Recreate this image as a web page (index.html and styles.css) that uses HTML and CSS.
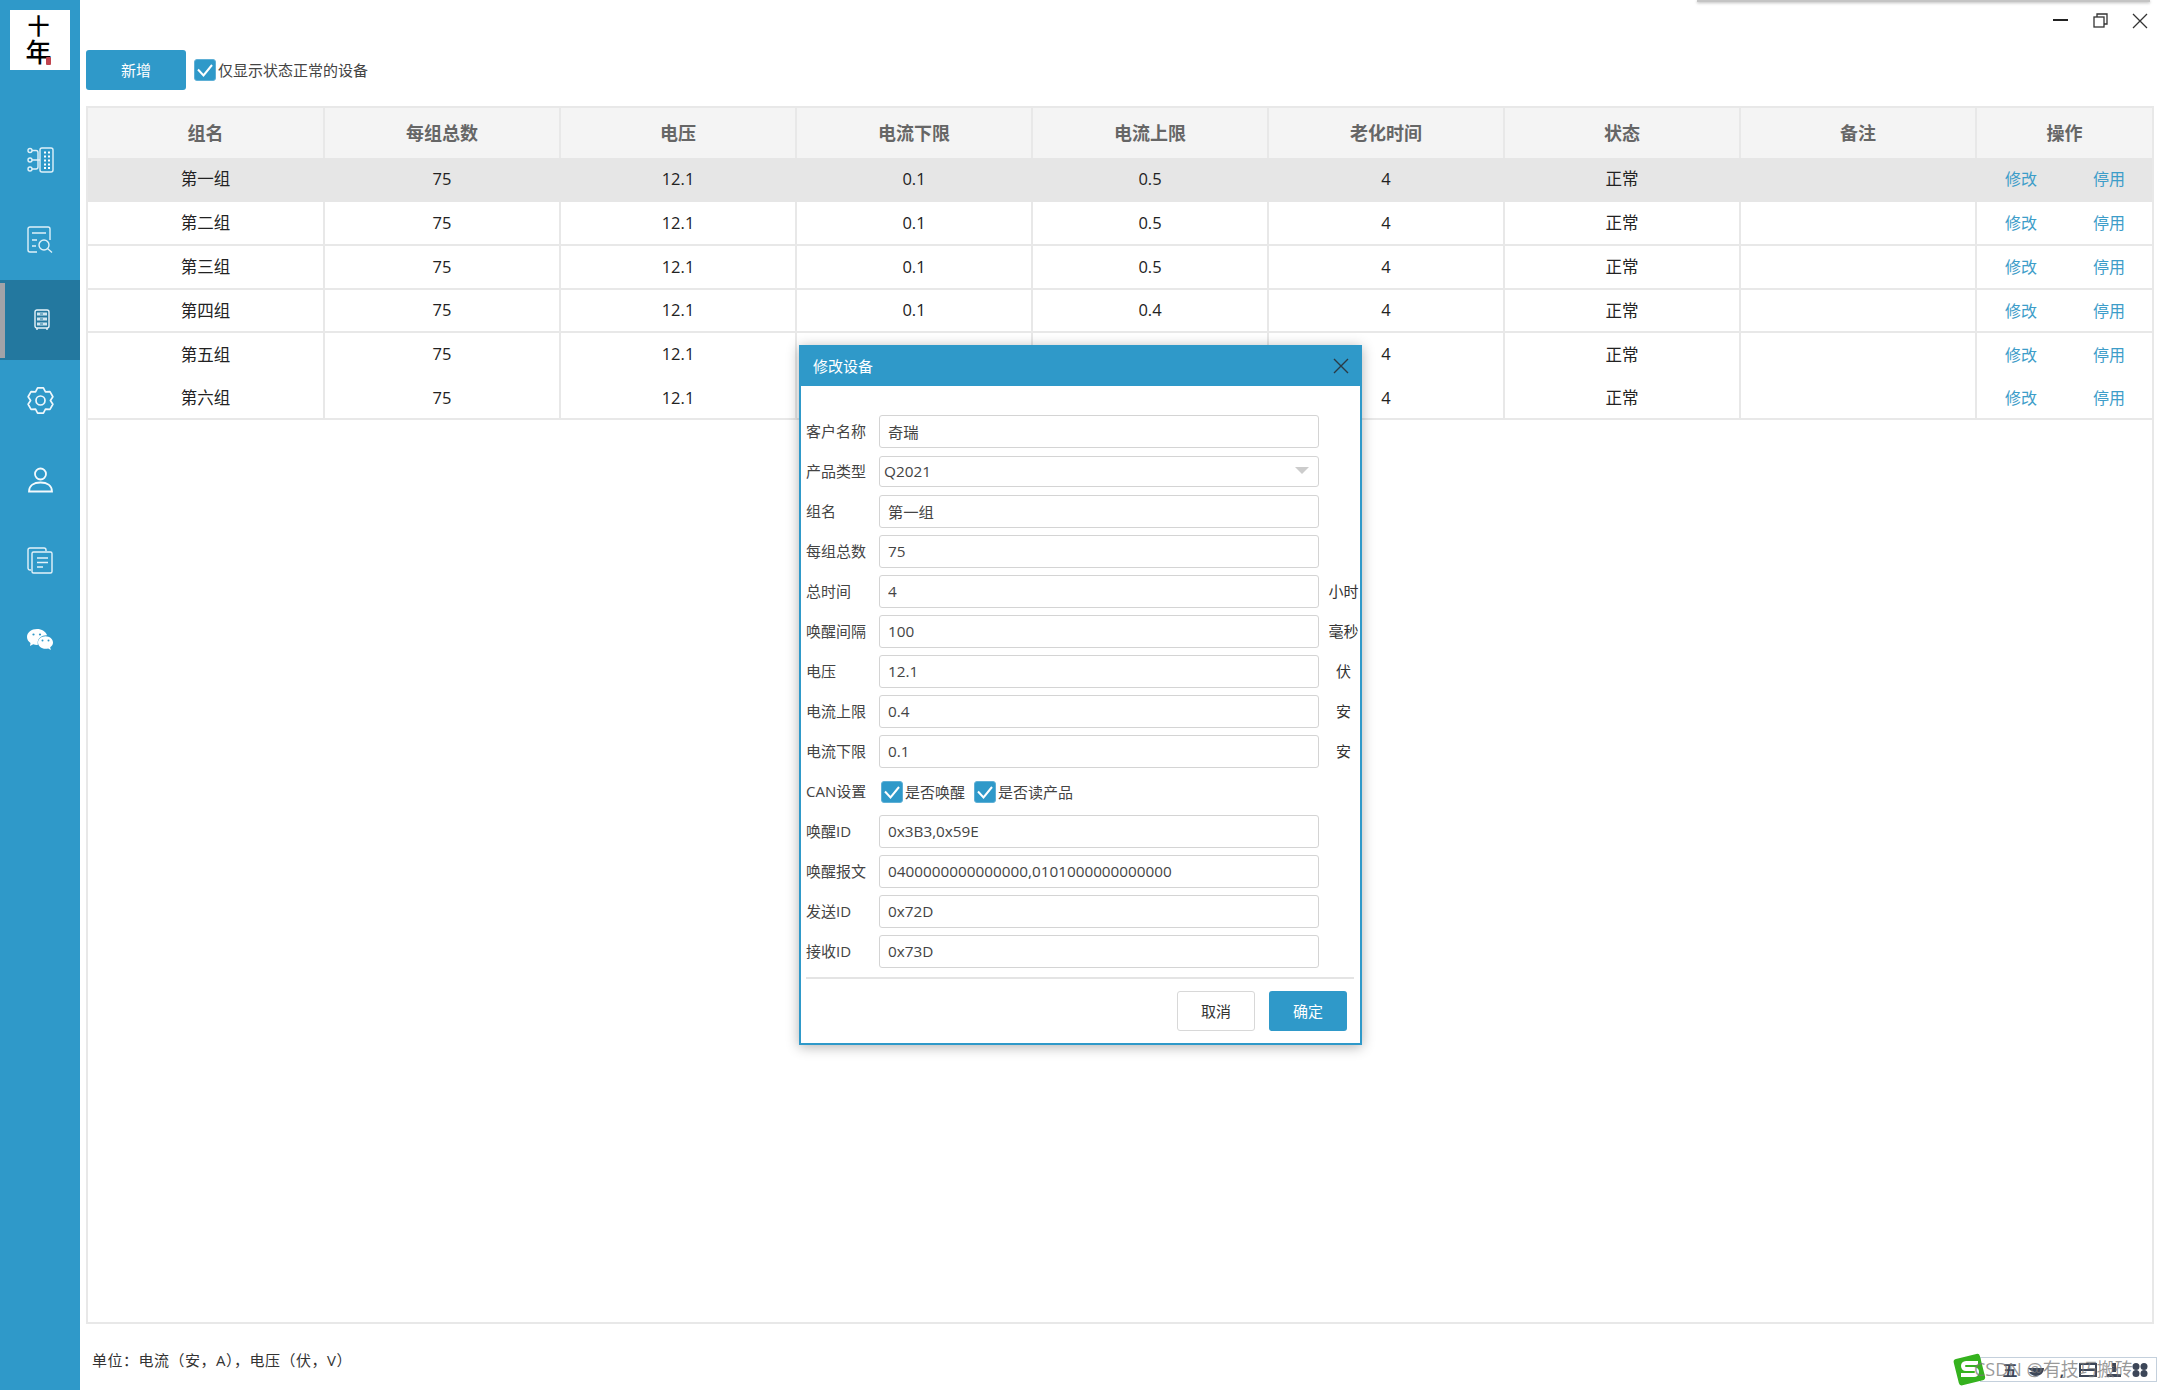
FILE: index.html
```html
<!DOCTYPE html>
<html lang="zh-CN">
<head>
  <meta charset="UTF-8">
  <title>设备管理</title>
  <link rel="stylesheet" href="styles.css">
</head>
<body>

<div class="app">
  <aside class="sidebar">
    <div class="logo">
      <span class="logo-ten">十</span>
      <span class="logo-year">年</span>
      <span class="logo-seal"></span>
    </div>

    <a class="nav-item">
      <svg width="28" height="28" viewBox="0 0 28 28" fill="none" stroke="#dff1f9" stroke-width="1.4">
        <circle cx="4" cy="4.5" r="2"/><circle cx="4" cy="14" r="2"/><circle cx="4" cy="23" r="2"/>
        <path d="M6 4.5h4a2 2 0 0 1 2 2V21a2 2 0 0 1-2 2H6M6 14h8"/>
        <rect x="14" y="2" width="13" height="24" rx="2"/>
        <path d="M18 6.500h2M22 6.500h2M18 10.500h2M22 10.500h2M18 14.500h2M22 14.500h2M18 18.500h2M22 18.500h2M18 22h2M22 22h2" stroke="#fff" stroke-width="2"/>
      </svg>
    </a>
    <a class="nav-item">
      <svg width="28" height="28" viewBox="0 0 28 28" fill="none" stroke="#dff1f9" stroke-width="1.4">
        <path d="M11 26H4a2 2 0 0 1-2-2V3a2 2 0 0 1 2-2h18a2 2 0 0 1 2 2v11"/>
        <path d="M6 7h14M6 14h5M6 20h4"/>
        <circle cx="18" cy="19" r="5"/>
        <path d="M21.500 22.500L26 26.500"/>
      </svg>
    </a>
    <a class="nav-item active">
      <svg width="16" height="22" viewBox="0 0 16 22" fill="none" stroke="#e8f4fa" stroke-width="1.4">
        <rect x="1" y="1" width="14" height="18" rx="2"/>
        <path d="M3 19v2M13 19v2"/>
        <rect x="3" y="3.500" width="10" height="3" fill="#cfe6f0" stroke="none"/>
        <rect x="3" y="8.500" width="10" height="3" fill="#cfe6f0" stroke="none"/>
        <rect x="3" y="13.500" width="10" height="3" fill="#cfe6f0" stroke="none"/>
        <path d="M6 5h3M6 10h3M6 15h3" stroke="#23789f" stroke-width="1.2"/>
      </svg>
    </a>
    <a class="nav-item">
      <svg width="27" height="27" viewBox="0 0 24 24" fill="none" stroke="#f0f8fc" stroke-width="1.500" stroke-linejoin="round">
        <polygon points="14.59,.8 16.4,4.38 20.41,4.16 23,8.64 20.8,12 23,15.36 20.41,19.84 16.4,19.62 14.59,23.2 9.41,23.2 7.6,19.62 3.59,19.84 1,15.36 3.2,12 1,8.64 3.59,4.16 7.6,4.38 9.41,.8"/>
        <circle cx="12" cy="12" r="4"/>
      </svg>
    </a>
    <a class="nav-item nav-user">
      <svg width="27" height="27" viewBox="0 0 27 27" fill="none" stroke="#f4fafd" stroke-width="1.800">
        <circle cx="13.500" cy="8" r="5.500"/>
        <path d="M2 25.500c0-6 5-9 11.500-9s11.500 3 11.500 9z"/>
      </svg>
    </a>
    <a class="nav-item">
      <svg width="26" height="27" viewBox="0 0 26 27" fill="none" stroke="#e4f2f9" stroke-width="1.400">
        <path d="M4 23H3a2 2 0 0 1-2-2V3a2 2 0 0 1 2-2h14a2 2 0 0 1 2 2v1"/>
        <rect x="5" y="5" width="20" height="21" rx="1.500"/>
        <path d="M10 11h11M10 15.500h11M10 20h6"/>
      </svg>
    </a>
    <a class="nav-item">
      <svg width="26" height="22" viewBox="0 0 26 22" fill="#fff">
        <path d="M10 0C4.500 0 0 3.500 0 8c0 2.500 1.400 4.600 3.500 6L3 17l3.200-1.700c1.200.4 2.500.6 3.800.6.400 0 .7 0 1-.1-.2-.7-.3-1.400-.3-2.100 0-4.200 3.900-7.500 8.800-7.500h.6C18.900 2.700 14.800 0 10 0z"/>
        <path d="M26 13.500c0-3.500-3.400-6.300-7.500-6.300S11 10 11 13.500s3.400 6.300 7.500 6.300c1 0 1.900-.2 2.700-.4l2.600 1.500-.6-2.600c1.700-1.200 2.800-2.900 2.800-4.800z"/>
        <circle cx="6.500" cy="5.500" r="1.100" fill="#2f99c9"/><circle cx="13" cy="5.500" r="1.100" fill="#2f99c9"/>
        <circle cx="15.500" cy="11.500" r="1" fill="#2f99c9"/><circle cx="21.500" cy="11.500" r="1" fill="#2f99c9"/>
      </svg>
    </a>
  </aside>

  <main class="main">
    <div class="titlebar">
      <div class="top-shadow"></div>
      <svg class="win-btn" width="16" height="16" viewBox="0 0 16 16" stroke="#222" fill="none"><path d="M0 7h15" stroke-width="2"/></svg>
      <svg class="win-btn" width="16" height="16" viewBox="0 0 16 16" stroke="#333" fill="none" stroke-width="1.300"><rect x="1" y="4" width="10" height="10"/><path d="M4 4V1h10v10h-3"/></svg>
      <svg class="win-btn win-close" width="16" height="16" viewBox="0 0 16 16" stroke="#333" fill="none" stroke-width="1.300"><path d="M1 1l14 14M15 1L1 15"/></svg>
    </div>

    <div class="toolbar">
      <button class="btn btn-primary btn-add">新增</button>
      <label class="check check-large">
        <span class="check-box"><svg viewBox="0 0 20 20" fill="none" stroke="#fff" stroke-width="2"><path d="M3 9.500l5.500 6L17 5"/></svg></span>
        仅显示状态正常的设备
      </label>
    </div>

    <div class="table-wrap">
      <table class="grid">
        <colgroup>
          <col class="col"><col class="col"><col class="col"><col class="col">
          <col class="col"><col class="col"><col class="col"><col class="col"><col>
        </colgroup>
        <thead>
          <tr><th>组名</th><th>每组总数</th><th>电压</th><th>电流下限</th><th>电流上限</th><th>老化时间</th><th>状态</th><th>备注</th><th>操作</th></tr>
        </thead>
        <tbody>
          <tr class="selected"><td>第一组</td><td>75</td><td>12.1</td><td>0.1</td><td>0.5</td><td>4</td><td>正常</td><td></td><td class="ops"><a>修改</a><a>停用</a></td></tr>
          <tr><td>第二组</td><td>75</td><td>12.1</td><td>0.1</td><td>0.5</td><td>4</td><td>正常</td><td></td><td class="ops"><a>修改</a><a>停用</a></td></tr>
          <tr><td>第三组</td><td>75</td><td>12.1</td><td>0.1</td><td>0.5</td><td>4</td><td>正常</td><td></td><td class="ops"><a>修改</a><a>停用</a></td></tr>
          <tr><td>第四组</td><td>75</td><td>12.1</td><td>0.1</td><td>0.4</td><td>4</td><td>正常</td><td></td><td class="ops"><a>修改</a><a>停用</a></td></tr>
          <tr class="no-line"><td>第五组</td><td>75</td><td>12.1</td><td>0.1</td><td>0.5</td><td>4</td><td>正常</td><td></td><td class="ops"><a>修改</a><a>停用</a></td></tr>
          <tr><td>第六组</td><td>75</td><td>12.1</td><td>0.1</td><td>0.5</td><td>4</td><td>正常</td><td></td><td class="ops"><a>修改</a><a>停用</a></td></tr>
        </tbody>
      </table>
    </div>

    <div class="footer">单位：电流（安，A），电压（伏，V）</div>
  </main>
</div>

<!-- 修改设备 弹窗 -->
<div class="dialog">
  <div class="dialog-head">
    <span>修改设备</span>
    <svg width="16" height="16" viewBox="0 0 16 16" stroke="#2b3a44" fill="none" stroke-width="1.400"><path d="M1 1l14 14M15 1L1 15"/></svg>
  </div>
  <div class="dialog-body">
    <div class="form-row"><label>客户名称</label><input class="field" value="奇瑞"></div>
    <div class="form-row"><label>产品类型</label><div class="field select"><span>Q2021</span><i class="caret"></i></div></div>
    <div class="form-row"><label>组名</label><input class="field" value="第一组"></div>
    <div class="form-row"><label>每组总数</label><input class="field" value="75"></div>
    <div class="form-row"><label>总时间</label><input class="field" value="4"><span class="unit">小时</span></div>
    <div class="form-row"><label>唤醒间隔</label><input class="field" value="100"><span class="unit">毫秒</span></div>
    <div class="form-row"><label>电压</label><input class="field" value="12.1"><span class="unit">伏</span></div>
    <div class="form-row"><label>电流上限</label><input class="field" value="0.4"><span class="unit">安</span></div>
    <div class="form-row"><label>电流下限</label><input class="field" value="0.1"><span class="unit">安</span></div>
    <div class="form-row">
      <label>CAN设置</label>
      <div class="check-group">
        <span class="check"><span class="check-box"><svg viewBox="0 0 20 20" fill="none" stroke="#fff" stroke-width="2"><path d="M3 9.500l5.500 6L17 5"/></svg></span>是否唤醒</span>
        <span class="check"><span class="check-box"><svg viewBox="0 0 20 20" fill="none" stroke="#fff" stroke-width="2"><path d="M3 9.500l5.500 6L17 5"/></svg></span>是否读产品</span>
      </div>
    </div>
    <div class="form-row"><label>唤醒ID</label><input class="field" value="0x3B3,0x59E"></div>
    <div class="form-row"><label>唤醒报文</label><input class="field" value="0400000000000000,0101000000000000"></div>
    <div class="form-row"><label>发送ID</label><input class="field" value="0x72D"></div>
    <div class="form-row"><label>接收ID</label><input class="field" value="0x73D"></div>
  </div>
  <div class="dialog-foot">
    <button class="btn btn-plain">取消</button>
    <button class="btn btn-primary">确定</button>
  </div>
</div>

<!-- 输入法工具条 + 水印 -->
<div class="ime">
  <svg class="ime-logo" width="34" height="34" viewBox="0 0 34 34">
    <rect x="3" y="3" width="27" height="27" rx="3" fill="#35b21e" transform="rotate(-14 17 17)"/>
    <path d="M25 10H13c-4 0-4 6 0 6h8c4 0 4 6 0 6H8" fill="none" stroke="#fff" stroke-width="4"/>
  </svg>
  <span class="ime-icon">五</span>
  <svg class="ime-svg" width="20" height="16" viewBox="0 0 20 16" fill="#3c4658"><path d="M2 6h16c0 5-4 8-8 8-3 0-6-2-7-4h5C6 9 3 8 2 6z"/></svg>
  <span class="ime-icon">,</span>
  <svg class="ime-svg" width="20" height="16" viewBox="0 0 20 16" fill="none" stroke="#3c4658" stroke-width="2"><rect x="2" y="2" width="16" height="12"/><path d="M2 8h16"/></svg>
  <svg class="ime-svg" width="20" height="16" viewBox="0 0 20 16" fill="#3c4658"><path d="M8 1h4v9H8zM3 12h14v3H3z"/></svg>
  <svg class="ime-svg" width="20" height="16" viewBox="0 0 20 16" fill="#3c4658"><circle cx="6" cy="4.500" r="3.500"/><circle cx="14" cy="4.500" r="3.500"/><circle cx="6" cy="11.500" r="3.500"/><circle cx="14" cy="11.500" r="3.500"/></svg>
  <span class="watermark">CSDN @有技巧搬砖</span>
</div>

</body>
</html>
```

FILE: styles.css
```css
* {
  box-sizing: border-box;
}

html, body {
  margin: 0;
  height: 100%;
}

body {
  font-family: "Open Sans", "Noto Sans CJK SC", sans-serif;
  font-size: 15px;
  color: #333;
  background: #fff;
  overflow: hidden;
}

.app {
  display: flex;
  height: 1390px;
}

/* 左侧菜单 */
.sidebar {
  width: 80px;
  flex-shrink: 0;
  background: #2f99c9;
  padding-top: 120px;
  position: relative;
}

.logo {
  position: absolute;
  left: 10px;
  top: 10px;
  width: 60px;
  height: 60px;
  background: #fff;
  text-align: center;
  color: #000;
  padding: 3px 3px 0 0;
}

.logo-ten {
  display: block;
  font-size: 22px;
  font-weight: 500;
  line-height: 24px;
}

.logo-year {
  display: block;
  font-size: 26px;
  font-weight: 500;
  line-height: 30px;
}

.logo-seal {
  position: absolute;
  left: 36px;
  top: 47px;
  width: 5px;
  height: 8px;
  background: #c0444f;
  border-radius: 1px;
}

.nav-item {
  display: flex;
  align-items: center;
  justify-content: center;
  height: 80px;
}

.nav-item.active {
  background: #23789f;
  padding-left: 4px;
  position: relative;
}

.nav-item.active::before {
  content: "";
  position: absolute;
  left: 0;
  top: 3px;
  width: 5px;
  height: 75px;
  background: #a2a3a8;
}

.nav-user {
  padding-bottom: 2px;
}

/* 主区域 */
.main {
  flex: 1;
  min-width: 0;
  display: flex;
  flex-direction: column;
  padding: 0 6px;
}

.titlebar {
  height: 50px;
  display: flex;
  justify-content: flex-end;
  gap: 24px;
  padding: 13px 6px 0 0;
  position: relative;
}

.win-close {
  margin-left: -1px;
}

.top-shadow {
  position: absolute;
  left: 1611px;
  top: 0;
  width: 453px;
  height: 2px;
  background: #c4c4c4;
  box-shadow: 0 1px 3px rgba(0, 0, 0, 0.3);
}

.toolbar {
  height: 40px;
  display: flex;
  align-items: center;
  margin-bottom: 16px;
  line-height: 20px;
}

.btn {
  border: none;
  border-radius: 3px;
  font-family: inherit;
  font-size: 15px;
  padding: 0 0 2px;
  cursor: pointer;
}

.btn-primary {
  background: #2f99c9;
  color: #fff;
}

.btn-plain {
  background: #fff;
  color: #333;
  border: 1px solid #d8d8d8;
}

.btn-add {
  width: 100px;
  height: 40px;
  margin-right: 8px;
}

.check {
  display: inline-flex;
  align-items: center;
  color: #444;
  line-height: 18px;
}

.check-box {
  display: inline-block;
  width: 22px;
  height: 22px;
  background: #2f99c9;
  border: 1px solid #5fb0d6;
  border-radius: 3px;
  margin-right: 2px;
}

.check-box svg {
  display: block;
  width: 100%;
  height: 100%;
}

.check-large {
  font-size: 15px;
  padding-bottom: 1px;
}

/* 表格 */
.table-wrap {
  flex: 1;
  border: 2px solid #e8e8e8;
}

.grid {
  width: 100%;
  border-collapse: collapse;
  table-layout: fixed;
}

.col {
  width: 236px;
}

.grid th {
  height: 50px;
  padding: 0 0 3px;
  background: #f4f4f4;
  color: #666;
  font-size: 18px;
  font-weight: 700;
  border-right: 2px solid #e8e8e8;
}

.grid th:last-child,
.grid td:last-child {
  border-right: none;
}

.grid td {
  height: 44px;
  padding: 0 0 2px;
  text-align: center;
  font-size: 16.500px;
  color: #222;
  border-right: 2px solid #e8e8e8;
  border-bottom: 2px solid #e8e8e8;
}

/* 第 1、4、6 行矮 1px */
.grid tr:nth-child(3n+1) td,
.grid tr:last-child td {
  height: 43px;
}

.grid tr:last-child td {
  padding-bottom: 0;
}

.grid tr.selected td {
  background: #e6e6e6;
  border-color: #e6e6e6;
}

.grid tr.no-line td {
  border-bottom: none;
}

.grid td.ops {
  text-align: left;
  padding-left: 28px;
  font-size: 16px;
}

.ops a {
  color: #3d9dc9;
  margin-right: 56px;
}

.ops a:last-child {
  margin-right: 0;
}

.footer {
  height: 66px;
  padding: 26px 0 0 6px;
  font-size: 15px;
  letter-spacing: 0.5px;
  line-height: 20px;
  color: #333;
}

/* 弹窗 */
.dialog {
  position: absolute;
  left: 799px;
  top: 345px;
  width: 563px;
  height: 700px;
  background: #fff;
  border: 2px solid #2f99c9;
  box-shadow: 0 2px 12px rgba(0, 0, 0, 0.3);
}

.dialog-head {
  height: 39px;
  background: #2f99c9;
  color: #fff;
  padding: 0 11px 2px 12px;
  display: flex;
  align-items: center;
  justify-content: space-between;
}

.dialog-body {
  padding: 29px 0 0 5px;
  display: grid;
  grid-auto-rows: 33px;
  row-gap: 7px;
}

.form-row {
  display: flex;
  align-items: center;
}

.form-row label {
  width: 73px;
  color: #444;
  padding-bottom: 2px;
}

.field {
  width: 440px;
  height: 33px;
  border: 1.500px solid #d4d4d4;
  border-radius: 3px;
  padding: 0 8px 2px;
  font-family: inherit;
  font-size: 15.300px;
  color: #444;
  background: #fff;
  outline: none;
}

.select {
  height: 31px;
  padding: 0 9px 2px 4px;
  display: flex;
  align-items: center;
  justify-content: space-between;
}

.caret {
  width: 0;
  height: 0;
  border-left: 7px solid transparent;
  border-right: 7px solid transparent;
  border-top: 7px solid #ccc;
}

.unit {
  width: 49px;
  text-align: center;
  color: #333;
  padding-bottom: 2px;
}

.check-group {
  display: flex;
  gap: 9px;
  padding-left: 2px;
}

.dialog-foot {
  margin: 9px 6px 0 5px;
  padding: 12px 7px 0 0;
  border-top: 2px solid #e4e4e4;
  display: flex;
  justify-content: flex-end;
  gap: 14px;
}

.dialog-foot .btn {
  width: 78px;
  height: 40px;
}

/* 输入法工具条 */
.ime {
  position: absolute;
  left: 1980px;
  top: 1357px;
  width: 177px;
  height: 25px;
  background: #fff;
  border: 1px solid #c4d0dc;
  display: flex;
  align-items: center;
  justify-content: flex-end;
  gap: 6px;
  padding-right: 6px;
}

.ime-logo {
  position: absolute;
  left: -28px;
  top: -5px;
}

.ime-icon {
  width: 20px;
  text-align: center;
  font-size: 15px;
  font-weight: 700;
  line-height: 20px;
  color: #3c4658;
}

.watermark {
  position: absolute;
  left: -7px;
  top: -1px;
  font-size: 18px;
  line-height: 24px;
  white-space: nowrap;
  color: rgba(120, 120, 120, 0.75);
}
```
